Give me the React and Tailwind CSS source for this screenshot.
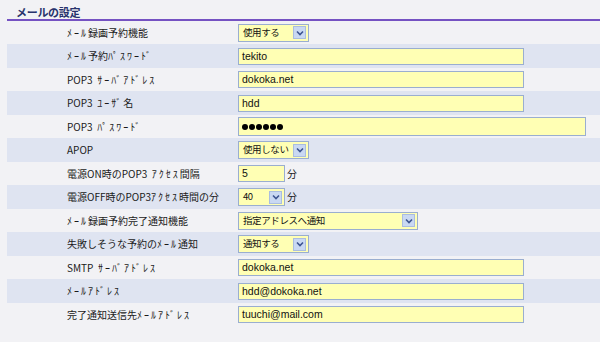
const FONT = { fontFamily: '"Noto Sans CJK JP", "Noto Sans", sans-serif' };

const ROWS = [
  { label: 'ﾒｰﾙ録画予約機能', type: 'select', value: '使用する', w: 'w-[71px]' },
  { label: 'ﾒｰﾙ予約ﾊﾟｽﾜｰﾄﾞ', type: 'text', value: 'tekito' },
  { label: 'POP3 ｻｰﾊﾞｱﾄﾞﾚｽ', type: 'text', value: 'dokoka.net' },
  { label: 'POP3 ﾕｰｻﾞ名', type: 'text', value: 'hdd' },
  { label: 'POP3 ﾊﾟｽﾜｰﾄﾞ', type: 'password' },
  { label: 'APOP', type: 'select', value: '使用しない', w: 'w-[71px]' },
  { label: '電源ON時のPOP3 ｱｸｾｽ間隔', type: 'short', value: '5', unit: '分' },
  { label: '電源OFF時のPOP3ｱｸｾｽ時間の分', type: 'select', value: '40', w: 'w-[47px]', unit: '分' },
  { label: 'ﾒｰﾙ録画予約完了通知機能', type: 'select', value: '指定アドレスへ通知', w: 'w-[180px]' },
  { label: '失敗しそうな予約のﾒｰﾙ通知', type: 'select', value: '通知する', w: 'w-[71px]' },
  { label: 'SMTP ｻｰﾊﾞｱﾄﾞﾚｽ', type: 'text', value: 'dokoka.net' },
  { label: 'ﾒｰﾙｱﾄﾞﾚｽ', type: 'text', value: 'hdd@dokoka.net' },
  { label: '完了通知送信先ﾒｰﾙｱﾄﾞﾚｽ', type: 'text', value: 'tuuchi@mail.com' },
];

// half-width kana runs get extra spacing, like the old bitmap font did
function Label({ text }) {
  const parts = text.split(/([\uFF61-\uFF9F]+)/).filter(Boolean);
  return (
    <>
      {parts.map((p, i) =>
        /[\uFF61-\uFF9F]/.test(p)
          ? <span key={i} className="tracking-[2px]">{p}</span>
          : <span key={i} className="whitespace-pre">{p.replace(/ $/, '  ')}</span>
      )}
    </>
  );
}

function Chevron() {
  return (
    <svg width="8" height="6" viewBox="0 0 8 6">
      <polyline points="1,1.5 4,4.5 7,1.5" fill="none" stroke="#3d5490" strokeWidth="1.6" />
    </svg>
  );
}

function Field({ row }) {
  if (row.type === 'select') {
    return (
      <div className={`${row.w} h-[18px] flex items-center justify-between border border-[#9aaed0] bg-[#ffffb4] pl-[4px] pr-[2px]`}>
        <span className="text-[9.5px] text-[#111] tracking-[-0.4px] leading-none whitespace-nowrap">{row.value}</span>
        <span className="shrink-0 w-[13px] h-[13px] flex items-center justify-center bg-[#c9d8f2] border border-[#aabde0]">
          <Chevron />
        </span>
      </div>
    );
  }
  if (row.type === 'password') {
    return (
      <div className="w-[348px] h-[19px] flex items-center gap-[1px] border border-[#9aaed0] bg-[#ffffb4] px-[3px]">
        {[0, 1, 2, 3, 4, 5].map(n => (
          <span key={n} className="w-[6px] h-[6px] rounded-full bg-black" />
        ))}
      </div>
    );
  }
  const w = row.type === 'short' ? 'w-[47px]' : 'w-[286px]';
  return (
    <div className={`${w} h-[17px] flex items-center border border-[#9aaed0] bg-[#ffffb4] px-[3px]`}>
      <span className="text-[10.5px] text-[#111] leading-none" style={{ fontFamily: '"Liberation Sans", sans-serif' }}>{row.value}</span>
    </div>
  );
}

export default function App() {
  return (
    <div className="w-[600px] h-[342px] bg-[#f2f2f5] overflow-hidden" style={FONT}>
      <div className="ml-[7px] h-[21px] border-b-2 border-[#7552c2] pl-[9px] flex items-end pb-[1px]">
        <span className="text-[11px] font-bold text-[#28336c] tracking-[-0.3px] leading-none">メールの設定</span>
      </div>
      <div className="ml-[7px]">
        {ROWS.map((row, i) => (
          <div
            key={row.label}
            className={`flex items-center ${i % 2 === 1 ? 'h-[24px] bg-[#dfe4f1]' : 'h-[23px]'}`}
          >
            <div className="w-[231px] pl-[60px] text-[10px] text-[#1a1a1a] leading-none whitespace-nowrap">
              <Label text={row.label} />
            </div>
            <Field row={row} />
            {row.unit && <span className="ml-[2px] text-[10px] text-[#1a1a1a] leading-none">{row.unit}</span>}
          </div>
        ))}
      </div>
    </div>
  );
}
